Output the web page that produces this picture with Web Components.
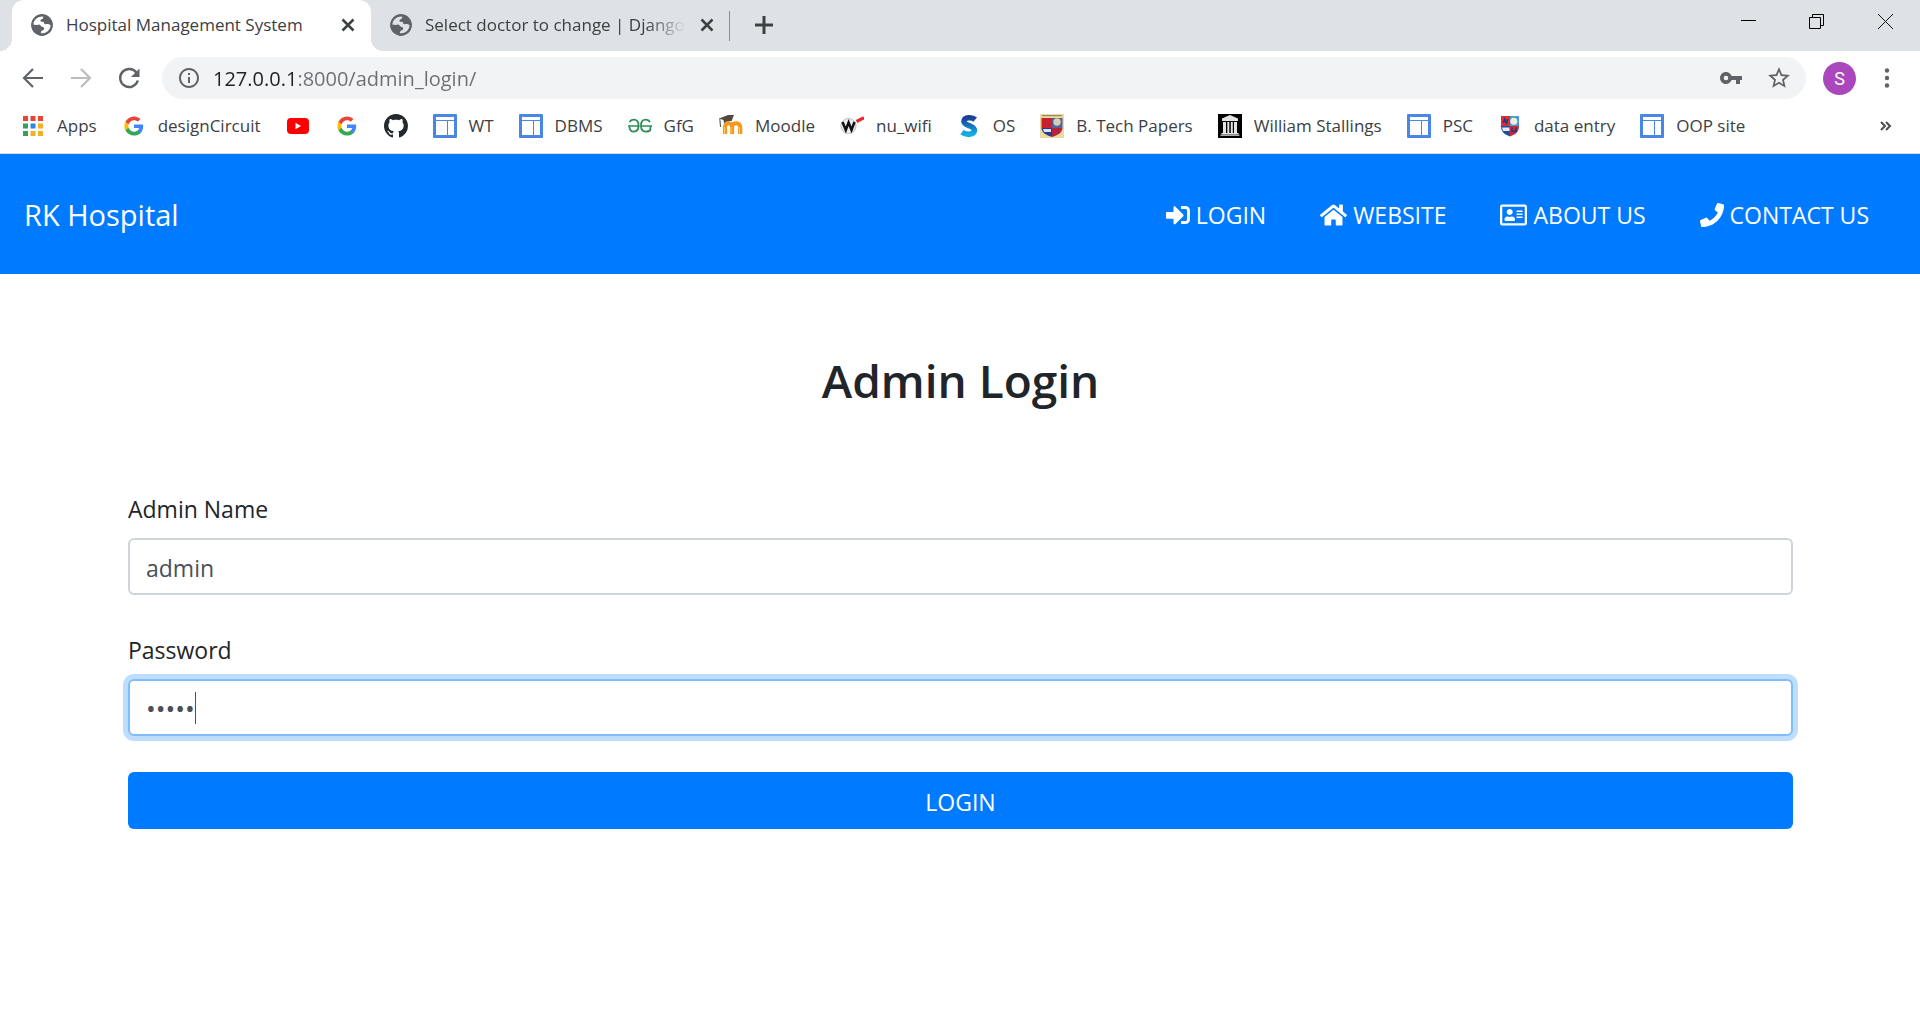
<!DOCTYPE html>
<html lang="en">
<head>
<meta charset="utf-8">
<title>Hospital Management System</title>
<style>
  html, body { margin: 0; min-height: 100%; background: #fff; }
  body { font-family: "Open Sans", "Noto Sans", sans-serif; color: #212529; }
</style>
</head>
<body>
<browser-frame>
  <tab-strip slot="tabs">
    <browser-tab active>Hospital Management System</browser-tab>
    <browser-tab>Select doctor to change | Django site admin</browser-tab>
  </tab-strip>
  <browser-toolbar slot="toolbar" url="127.0.0.1:8000/admin_login/"></browser-toolbar>
  <bookmark-bar slot="bookmarks">
    <book-mark icon="apps">Apps</book-mark>
    <book-mark icon="google">designCircuit</book-mark>
    <book-mark icon="youtube"></book-mark>
    <book-mark icon="google"></book-mark>
    <book-mark icon="github"></book-mark>
    <book-mark icon="site">WT</book-mark>
    <book-mark icon="site">DBMS</book-mark>
    <book-mark icon="gfg">GfG</book-mark>
    <book-mark icon="moodle">Moodle</book-mark>
    <book-mark icon="wifi">nu_wifi</book-mark>
    <book-mark icon="os">OS</book-mark>
    <book-mark icon="crest">B. Tech Papers</book-mark>
    <book-mark icon="archive">William Stallings</book-mark>
    <book-mark icon="site">PSC</book-mark>
    <book-mark icon="shield">data entry</book-mark>
    <book-mark icon="site">OOP site</book-mark>
  </bookmark-bar>
  <site-nav brand="RK Hospital">
    <nav-link icon="signin">LOGIN</nav-link>
    <nav-link icon="home">WEBSITE</nav-link>
    <nav-link icon="card">ABOUT US</nav-link>
    <nav-link icon="phone">CONTACT US</nav-link>
  </site-nav>
  <login-form heading="Admin Login">
    <form-field label="Admin Name" type="text" value="admin"></form-field>
    <form-field label="Password" type="password" value="admin" focused></form-field>
  </login-form>
</browser-frame>

<script>
const G = '#5f6368';
const siteIcon = `<rect width="24" height="24" rx="1" fill="#4a86e8"/><path fill="#fff" d="M3 3h18v3H3zM3 7h11v14H3zM15 7h6v14h-6z"/>`;
const icons = {
  globe: ['0 0 24 24', `<circle cx="12" cy="12" r="10.7" fill="${G}"/><path fill="var(--land,#fff)" d="M8.200 4.200c2-.9 4.300-1.100 6.300-.5-1.300 1-1.200 2.100-2.700 2.600-1.100.4-1.700 1.200-1.200 2 .5.800 1.700.4 2.700.7.900.3.600 1.400 1.500 1.900 1.300.7 2.900-.4 4.100.4.800.5 1.600.9 2.300.6-.3 3.500-2.600 6.600-5.900 7.900-1.200.5-2.500.8-4.200.8-.5-1.500-.1-2.700 1.200-3.100 1.300-.3 1.900-1 1.800-2-.1-1.100-.8-1.700-1.900-1.800-1.400-.2-1.300-1.600-2.600-2-1.100-.3-1.800.3-3 .2l-3.700-.3c.3-3.300 2.300-6.100 5.300-7.400z"/><path fill="${G}" d="M12.400 3.500c2.500-.4 5.200.5 7 2.500 1.500 1.600 2.100 3.500 2.100 5.200-1.200.3-2-.2-3-.6-1.300-.5-2.500.3-3.400-.3-.8-.5-.5-1.500-1.400-2-.7-.3-1.500 0-1.900-.5-.5-.6.1-1.200.9-1.500 1.300-.5.700-2-.3-2.800z"/><circle cx="12" cy="12" r="9.700" fill="none" stroke="${G}" stroke-width="2"/>`],
  close: ['0 0 24 24', `<path fill="none" stroke="#3c4043" stroke-width="2.500" d="M6.500 6.500l11 11M17.500 6.500l-11 11"/>`],
  plus: ['0 0 24 24', `<path stroke="#3c4043" stroke-width="3" d="M12 3v18M3 12h18"/>`],
  winmin: ['0 0 24 24', `<path stroke="#000" d="M5 11.500h15"/>`],
  winmax: ['0 0 24 24', `<path fill="none" stroke="#000" d="M7.500 8V5.500h11v11H16M4.500 8.500h11v11h-11z"/>`],
  winclose: ['0 0 24 24', `<path stroke="#111" d="M4 5l15 15M19 5L4 20"/>`],
  back: ['0 0 24 24', `<path fill="none" stroke="${G}" stroke-width="2.200" d="M22 12H3M12 3l-9 9 9 9"/>`],
  forward: ['0 0 24 24', `<path fill="none" stroke="#babcbe" stroke-width="2.200" d="M2 12h19M12 3l9 9-9 9"/>`],
  reload: ['0 0 24 24', `<path fill="none" stroke="${G}" stroke-width="2.400" d="M19.300 6.500A9 9 0 1 0 20.800 14.500"/><path fill="${G}" d="M22.500 2.500V11H14z"/>`],
  info: ['0 0 24 24', `<path fill="${G}" d="M11 7h2v2h-2zm0 4h2v6h-2zm1-9C6.480 2 2 6.480 2 12s4.480 10 10 10 10-4.480 10-10S17.520 2 12 2zm0 18c-4.410 0-8-3.590-8-8s3.590-8 8-8 8 3.590 8 8-3.590 8-8 8z"/>`],
  key: ['0 0 24 24', `<path fill="${G}" d="M12.650 10C11.830 7.670 9.610 6 7 6c-3.310 0-6 2.690-6 6s2.690 6 6 6c2.610 0 4.830-1.670 5.650-4H17v4h4v-4h2v-4H12.650zM7 14.300a2.300 2.300 0 1 1 0-4.600 2.300 2.300 0 0 1 0 4.600z"/>`],
  star: ['1 1 22 22', `<path fill="${G}" d="M22 9.240l-7.190-.62L12 2 9.190 8.630 2 9.240l5.460 4.730L5.820 21 12 17.270 18.180 21l-1.630-7.030L22 9.240zM12 15.400l-3.760 2.270 1-4.280-3.320-2.880 4.380-.38L12 6.100l1.710 4.040 4.380.38-3.320 2.880 1 4.280L12 15.400z"/>`],
  dots: ['0 0 24 24', `<g fill="${G}"><circle cx="12" cy="4.500" r="2.200"/><circle cx="12" cy="12" r="2.200"/><circle cx="12" cy="19.500" r="2.200"/></g>`],
  more: ['0 0 24 24', `<path fill="none" stroke="#4a4d51" stroke-width="2" d="M8 8l4 4-4 4M13 8l4 4-4 4"/>`],
  apps: ['0 0 24 24', `<g fill="#ea4335"><path d="M2 2h5v5H2zM9.500 2h5v5h-5zM17 2h5v5h-5z"/></g><path fill="#34a058" d="M2 9.500h5v5H2zM2 17h5v5H2z"/><path fill="#2d87e8" d="M9.500 9.500h5v5h-5z"/><path fill="#f2b022" d="M17 9.500h5v5h-5zM9.500 17h5v5h-5zM17 17h5v5h-5z"/>`],
  google: ['0 0 24 24', `<g transform="translate(2.400 2.400) scale(.8)"><path fill="#4285f4" d="M23.490 12.270c0-.79-.07-1.540-.19-2.270H12v4.510h6.470c-.29 1.480-1.140 2.730-2.400 3.580v3h3.860c2.260-2.090 3.560-5.170 3.560-8.820z"/><path fill="#34a853" d="M12 24c3.240 0 5.950-1.080 7.930-2.910l-3.860-3c-1.080.72-2.450 1.160-4.070 1.160-3.130 0-5.780-2.110-6.730-4.960H1.290v3.090C3.260 21.300 7.310 24 12 24z"/><path fill="#fbbc05" d="M5.270 14.290c-.25-.72-.38-1.490-.38-2.290s.14-1.570.38-2.290V6.620H1.290C.47 8.240 0 10.060 0 12s.47 3.760 1.290 5.380l3.980-3.090z"/><path fill="#ea4335" d="M12 4.750c1.770 0 3.350.61 4.600 1.800l3.420-3.420C17.950 1.190 15.240 0 12 0 7.310 0 3.260 2.700 1.290 6.620l3.980 3.090c.95-2.850 3.600-4.960 6.730-4.960z"/></g>`],
  youtube: ['0 0 24 24', `<rect x="1" y="4" width="22" height="16" rx="4" fill="#f00"/><path fill="#fff" d="M9.500 8.800v6.400l5.500-3.200z"/>`],
  github: ['0 0 16 16', `<path fill="#24292e" d="M8 0C3.580 0 0 3.580 0 8c0 3.540 2.290 6.530 5.470 7.590.4.070.55-.17.55-.38 0-.19-.01-.82-.01-1.490-2.010.37-2.530-.49-2.690-.94-.09-.23-.48-.94-.82-1.130-.28-.15-.68-.52-.01-.53.63-.01 1.080.58 1.230.82.720 1.210 1.870.87 2.330.66.070-.52.280-.87.510-1.070-1.780-.2-3.640-.89-3.640-3.950 0-.87.310-1.590.82-2.150-.08-.2-.36-1.020.08-2.120 0 0 .67-.21 2.200.82.640-.18 1.320-.27 2-.27s1.360.09 2 .27c1.530-1.040 2.200-.82 2.200-.82.440 1.100.160 1.920.080 2.120.510.560.820 1.270.820 2.150 0 3.070-1.870 3.750-3.650 3.950.290.250.540.730.540 1.480 0 1.070-.01 1.930-.01 2.200 0 .21.150.46.550.38A8.010 8.010 0 0 0 16 8c0-4.420-3.580-8-8-8z"/>`],
  site: ['0 0 24 24', siteIcon],
  gfg: ['0 0 24 24', `<g fill="none" stroke="#2f8d57" stroke-width="1.800"><path d="M1.500 8.200C2.500 6.300 4 5.600 5.800 5.600c3 0 4.700 2.600 4.700 6s-1.700 6-4.700 6c-2.500 0-4.300-1.600-4.400-5.400"/><path d="M22 8.200c-1-1.900-2.500-2.600-4.300-2.600-3 0-4.700 2.600-4.700 6s1.700 6 4.700 6c2.500 0 4.300-.8 4.700-2v-3.400"/><path d="M0 12h11.500M12.500 12H24" stroke-width="1.400"/></g>`],
  moodle: ['0 0 24 24', `<path fill="none" stroke="#f39a1e" stroke-width="4.200" d="M6 20v-7c0-5 7-5 7 0v7M13 20v-7c0-5 8.200-5 8.200 0v7"/><path fill="none" stroke="#ffce6b" d="M5.500 20v-7M12 20v-7M20.500 20v-7"/><path fill="#53493f" d="M0 4.500L9 1h6l-1 2.500-1.500 3.800C11 6.500 7 7.300 5 9.300L4.500 6z"/><path fill="none" stroke="#444" d="M.8 4.500L1.500 13"/>`],
  wifi: ['0 0 24 24', `<circle cx="8.500" cy="12" r="7.500" fill="#eee" stroke="#bbb"/><path fill="none" stroke="#111" stroke-width="2.500" d="M2.500 8l3.300 8L8.600 8.500 11.500 16 14.500 8"/><path stroke="#e8232a" stroke-width="3.200" d="M16.500 7.500L24 3.800"/>`],
  os: ['0 0 24 24', `<defs><linearGradient id="s" x2="0" y2="1"><stop offset="0" stop-color="#1c3f94"/><stop offset=".5" stop-color="#1276c4"/><stop offset="1" stop-color="#12b0e0"/></linearGradient></defs><path fill="none" stroke="url(#s)" stroke-width="5.600" d="M18.200 5.700C15 3 7.500 2.800 7 7.300c-.4 5 10.500 3.500 10.400 9-.2 5-8.400 5-12.400 1.800"/>`],
  crest: ['0 0 24 24', `<path fill="#ecd9a0" d="M0 0h24v24H0z"/><path stroke="#877a5c" d="M2 1.700h20"/><path fill="#c8202f" d="M1.500 4H12v10H1.500z"/><path fill="#53629b" d="M12 4h10.500v10H12z"/><circle cx="17" cy="8" r="3.700" fill="#d8cfae"/><path fill="#253c8f" d="M1.500 14H12v9C6 21 2 19 1.500 14z"/><path fill="#b3243d" d="M12 14h10.500c-.5 5-4.500 7-10.500 9z"/><path fill="#dde3f2" d="M3 15h8v3H4z"/>`],
  archive: ['0 0 24 24', `<path d="M0 0h24v24H0z"/><path fill="#e3e3e3" d="M12 1l8 3.500V7H4V4.500zM5 8h3v11H5zM9.300 8h2v11h-2zM12.800 8h2v11h-2zM16 8h3v11h-3zM3.500 19h17v1.500h-17z"/><path fill="#aaa" d="M2.500 20.500h19V22h-19z"/>`],
  shield: ['0 0 24 24', `<path fill="#e12d35" d="M3 2h9v10H3z"/><path fill="#4a9bd4" d="M12 2h9v10h-9z"/><path fill="#1e4f9f" d="M3 12h9v10.500C6 20 3 18 3 12z"/><path fill="#c92b3b" d="M12 12h9c0 6-3 8-9 10.500z"/><circle cx="15.800" cy="7.200" r="3.500" fill="#f1eeda"/><path fill="#e7ebf5" d="M4 13.500h7.500V17H5z"/><path fill="none" stroke="#26387b" stroke-width="1.600" d="M5.500 9l1-4 2 4 1-4M14 13.500v4h4v-4"/>`],
  signin: ['0 0 512 512', `<path fill="#fff" d="M416 448h-84c-6.600 0-12-5.400-12-12v-40c0-6.600 5.400-12 12-12h84c17.700 0 32-14.300 32-32V160c0-17.700-14.300-32-32-32h-84c-6.600 0-12-5.400-12-12V76c0-6.600 5.400-12 12-12h84c53 0 96 43 96 96v192c0 53-43 96-96 96zm-47-201L201 79c-15-15-41-4.500-41 17v96H24c-13.300 0-24 10.700-24 24v96c0 13.300 10.700 24 24 24h136v96c0 21.500 26 32 41 17l168-168c9.300-9.400 9.300-24.600 0-34z"/>`],
  home: ['0 0 576 512', `<path fill="#fff" d="M280.370 148.260L96 300.110V464a16 16 0 0 0 16 16l112.060-.29a16 16 0 0 0 15.920-16V368a16 16 0 0 1 16-16h64a16 16 0 0 1 16 16v95.640a16 16 0 0 0 16 16.050L464 480a16 16 0 0 0 16-16V300L295.670 148.260a12.190 12.190 0 0 0-15.300 0zM571.600 251.470L488 182.560V44.050a12 12 0 0 0-12-12h-56a12 12 0 0 0-12 12v72.610L318.470 43a48 48 0 0 0-61 0L4.340 251.470a12 12 0 0 0-1.600 16.900l25.500 31A12 12 0 0 0 45.150 301l235.220-193.740a12.190 12.190 0 0 1 15.300 0L530.900 301a12 12 0 0 0 16.900-1.600l25.500-31a12 12 0 0 0-1.700-16.930z"/>`],
  card: ['0 0 576 512', `<path fill="#fff" d="M528 32H48C21.500 32 0 53.500 0 80v352c0 26.500 21.500 48 48 48h480c26.500 0 48-21.500 48-48V80c0-26.500-21.500-48-48-48zm0 400H48V80h480v352zM208 256c35.300 0 64-28.700 64-64s-28.700-64-64-64-64 28.700-64 64 28.700 64 64 64zm-89.600 128h179.200c12.400 0 22.400-8.600 22.400-19.200v-19.200c0-31.800-30.100-57.600-67.200-57.600-10.800 0-18.700 8-44.800 8-26.900 0-33.400-8-44.800-8-37.100 0-67.200 25.800-67.200 57.600v19.200c0 10.600 10 19.200 22.400 19.200zM360 320h112c4.400 0 8-3.600 8-8v-16c0-4.400-3.600-8-8-8H360c-4.400 0-8 3.600-8 8v16c0 4.400 3.600 8 8 8zm0-64h112c4.400 0 8-3.600 8-8v-16c0-4.400-3.600-8-8-8H360c-4.400 0-8 3.600-8 8v16c0 4.400 3.600 8 8 8zm0-64h112c4.400 0 8-3.600 8-8v-16c0-4.400-3.600-8-8-8H360c-4.400 0-8 3.600-8 8v16c0 4.400 3.600 8 8 8z"/>`],
  phone: ['0 0 512 512', `<path fill="#fff" d="M493.400 24.600l-104-24c-11.300-2.600-22.900 3.300-27.500 13.900l-48 112c-4.200 9.800-1.400 21.300 6.900 28l60.600 49.600c-36 76.700-98.900 140.500-177.200 177.200l-49.600-60.600c-6.800-8.300-18.200-11.100-28-6.900l-112 48C3.900 366.500-2 378.100.6 389.400l24 104C27.100 504.200 36.700 512 48 512c256.100 0 464-207.500 464-464 0-11.200-7.700-20.900-18.600-23.400z"/>`]
};

const define = (name, render, after) => customElements.define(name, class extends HTMLElement {
  constructor() { super(); this.attachShadow({ mode: 'open' }); }
  connectedCallback() {
    this.shadowRoot.innerHTML = render(this);
    if (after) after(this.shadowRoot, this);
  }
});
const reset = `button{all:unset;box-sizing:border-box;cursor:pointer}a{color:inherit;text-decoration:none}`;

define('ui-icon', el => {
  const [box, art] = icons[el.getAttribute('name')];
  return `<style>:host{display:block;flex:none;height:24px}svg{display:block;height:100%}</style><svg viewBox="${box}" aria-hidden="true">${art}</svg>`;
});

define('browser-frame', () => `<style>:host{display:flex;flex-direction:column}</style>
  <slot name="tabs"></slot><slot name="toolbar"></slot><slot name="bookmarks"></slot><slot></slot>`);

define('tab-strip', () => `<style>${reset}
  :host{display:flex;height:51px;background:#dee1e6;padding-left:12px}
  .tabs{display:flex}
  .new{display:flex;align-items:center;justify-content:center;width:68px;height:50px}
  .new ui-icon{width:24px}
  .win{display:flex;margin-left:auto}
  .win button{display:flex;align-items:center;justify-content:center;width:69px;height:42px}
  </style><div class="tabs" role="tablist"><slot></slot></div>
  <button class="new" aria-label="New tab"><ui-icon name="plus"></ui-icon></button>
  <div class="win"><button aria-label="Minimize"><ui-icon name="winmin"></ui-icon></button><button aria-label="Restore"><ui-icon name="winmax"></ui-icon></button><button aria-label="Close"><ui-icon name="winclose"></ui-icon></button></div>`);

define('browser-tab', () => `<style>${reset}
  :host{display:flex;align-items:center;box-sizing:border-box;width:359px;height:51px;padding:0 11px 1px 18px;position:relative;--land:#dee1e6;color:#3c4043;background:linear-gradient(#8a8d91,#8a8d91) right 11px/1px 30px no-repeat}
  :host([active]){background:#fff;border-radius:12px 12px 0 0;--land:#fff}
  :host([active])::before,:host([active])::after{content:"";position:absolute;bottom:0;width:12px;height:12px}
  :host([active])::before{right:100%;background:radial-gradient(circle at 0 0,transparent 12px,#fff 12px)}
  :host([active])::after{left:100%;background:radial-gradient(circle at 100% 0,transparent 12px,#fff 12px)}
  .title{flex:1;min-width:0;margin:0 9px 0 12px;font-size:17px;line-height:48px;height:50px;white-space:nowrap;overflow:hidden;mask-image:linear-gradient(90deg,#000 calc(100% - 40px),transparent)}
  :host([active]) .title{mask-image:none}
  </style><ui-icon name="globe"></ui-icon><button class="title" role="tab"><slot></slot></button><button aria-label="Close tab"><ui-icon name="close"></ui-icon></button>`);

define('browser-toolbar', el => `<style>${reset}
  :host{display:flex;align-items:center;height:54px;padding:0 12px;background:#fff}
  .btn{display:flex;align-items:center;justify-content:center;width:42px;height:42px;margin-right:6px}
  .bar{display:flex;align-items:center;flex:1;height:42px;margin:0 9px 0 6px;padding:0 3px 0 15px;border-radius:21px;background:#f1f3f4}
  input{flex:1;min-width:0;height:42px;border:0;outline:0;margin:0 0 0 12px;padding:0;font:20px "Open Sans","Noto Sans",sans-serif;color:#202124;background:linear-gradient(90deg,#202124 84px,#6b6f74 84px);background-clip:text;-webkit-text-fill-color:transparent}
  .act{width:48px;margin:0}
  .avatar{width:33px;height:33px;margin:0 10px 0 8px;border-radius:50%;background:#ab47bc;color:#fff;font:18px Roboto,sans-serif;line-height:33px;text-align:center}
  .menu{width:42px;margin:0}
  </style>
  <button class="btn" aria-label="Back"><ui-icon name="back"></ui-icon></button>
  <button class="btn" aria-label="Forward"><ui-icon name="forward"></ui-icon></button>
  <button class="btn" aria-label="Reload"><ui-icon name="reload"></ui-icon></button>
  <div class="bar"><ui-icon name="info"></ui-icon><input aria-label="Address" value="${el.getAttribute('url')}">
  <button class="btn act" aria-label="Saved password"><ui-icon name="key"></ui-icon></button><button class="btn act" aria-label="Bookmark"><ui-icon name="star"></ui-icon></button></div>
  <button class="avatar" aria-label="Profile">S</button><button class="btn menu" aria-label="Menu"><ui-icon name="dots"></ui-icon></button>`);

define('bookmark-bar', () => `<style>${reset}
  :host{display:flex;gap:25px;height:24px;padding:9px 23px 15px 21px;background:#fff;border-bottom:1px solid #dadce0}
  button{margin-left:auto}
  </style><slot></slot><button aria-label="More bookmarks"><ui-icon name="more"></ui-icon></button>`);

define('book-mark', el => `<style>${reset}
  :host{display:block}
  a{display:flex;gap:12px;font-size:17px;line-height:24px;color:#3c4043;white-space:nowrap}
  </style><a href="#" aria-label="${el.textContent || el.getAttribute('icon')}"><ui-icon name="${el.getAttribute('icon')}"></ui-icon>${el.textContent ? '<span><slot></slot></span>' : ''}</a>`);

define('site-nav', el => `<style>${reset}
  :host{display:block;background:#007bff;color:#fff}
  nav{display:flex;align-items:center;height:120px;padding:0 51px 0 24px}
  .brand{font-size:29px;line-height:45px}
  .links{display:flex;gap:54px;margin-left:auto}
  </style><nav><a class="brand" href="#">${el.getAttribute('brand')}</a><div class="links"><slot></slot></div></nav>`);

define('nav-link', el => `<style>${reset}
  :host{display:block}
  a{display:flex;align-items:center;gap:6px;padding-top:2px;font-size:23px;line-height:36px;white-space:nowrap}
  </style><a href="#"><ui-icon name="${el.getAttribute('icon')}"></ui-icon><span><slot></slot></span></a>`);

define('login-form', el => `<style>
  :host{display:block;padding:74px 127px 0 128px}
  h1{margin:0 0 78px;font-size:46px;line-height:64px;font-weight:600;text-align:center}
  form{display:flex;flex-direction:column}
  button{height:57px;padding:2px 0 0;border:0;border-radius:6px;background:#007bff;color:#fff;font:23px "Open Sans","Noto Sans",sans-serif;cursor:pointer}
  </style><h1>${el.getAttribute('heading')}</h1><form onsubmit="return false"><slot></slot><button type="submit">LOGIN</button></form>`);

define('form-field', el => `<style>
  :host{display:flex;flex-direction:column;margin-bottom:36px}
  label{font-size:23px;line-height:38px;margin-bottom:10px}
  .box{position:relative}
  input{display:block;box-sizing:border-box;width:100%;height:57px;padding:3px 16px 0;border:2px solid #ced4da;border-radius:6px;font:23px "Open Sans","Noto Sans",sans-serif;color:#495057;background:#fff;outline:0;caret-color:transparent}
  input[type=password]{font-size:26px;padding-top:1px}
  input:focus{border-color:#80bdff;box-shadow:0 0 0 5px rgba(0,123,255,.25)}
  .caret{position:absolute;left:67px;top:13px;width:1px;height:32px;background:#495057}
  </style><label for="f">${el.getAttribute('label')}</label><div class="box"><input id="f" type="${el.getAttribute('type')}" value="${el.getAttribute('value')}">${el.hasAttribute('focused') ? '<span class="caret"></span>' : ''}</div>`,
  (root, el) => {
    if (el.hasAttribute('focused')) {
      const input = root.getElementById('f');
      input.focus();
      input.setSelectionRange(input.value.length, input.value.length);
    }
  });
</script>
</body>
</html>
